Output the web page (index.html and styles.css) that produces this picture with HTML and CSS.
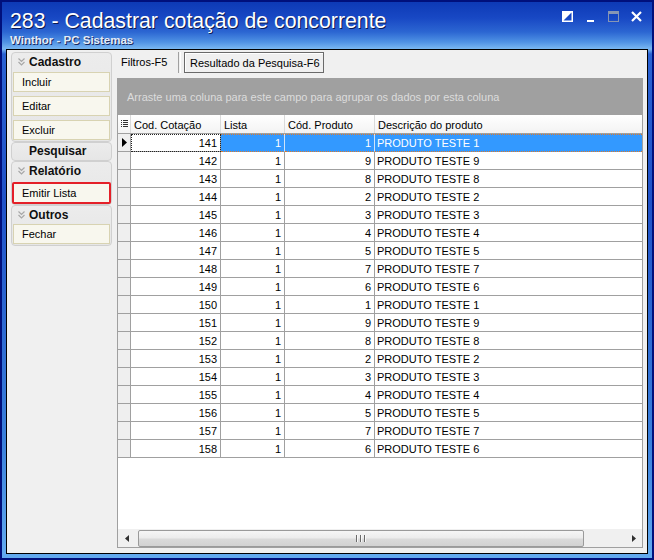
FILE: index.html
```html
<!DOCTYPE html>
<html lang="pt">
<head>
<meta charset="utf-8">
<title>283 - Cadastrar cotação de concorrente</title>
<link rel="stylesheet" href="styles.css">
</head>
<body>
<div class="window">
  <div class="titlebar">
    <div class="titles">
      <div class="title">283 - Cadastrar cotação de concorrente</div>
      <div class="subtitle">Winthor - PC Sistemas</div>
    </div>
    <div class="tbuttons">
      <svg class="tb" width="11" height="11" viewBox="0 0 11 11"><rect x="0.75" y="0.75" width="9.5" height="9.5" fill="none" stroke="#fff" stroke-width="1.5"/><polygon points="1,1 10,1 1,10" fill="#fff"/></svg>
      <svg class="tb" width="11" height="11" viewBox="0 0 11 11"><rect x="2" y="9" width="7" height="2" fill="#fff"/></svg>
      <svg class="tb" width="11" height="11" viewBox="0 0 11 11"><rect x="0.5" y="0.5" width="10" height="10" fill="none" stroke="#8796b4"/><rect x="0" y="0" width="11" height="3" fill="#8796b4"/></svg>
      <svg class="tb" width="11" height="11" viewBox="0 0 11 11"><path d="M1 1 L10 10 M10 1 L1 10" stroke="#fff" stroke-width="2.2"/></svg>
    </div>
  </div>
  <div class="client">
    <div class="sidebar">
      <div class="panel">
        <div class="phead"><svg class="chev" width="7" height="8" viewBox="0 0 7 8"><path d="M0.5 0.5 L3.5 3.5 L6.5 0.5 M0.5 4 L3.5 7 L6.5 4" fill="none" stroke="#a8a8a8" stroke-width="1.2"/></svg><span>Cadastro</span></div>
        <div class="item first">Incluir</div>
        <div class="item">Editar</div>
        <div class="item">Excluir</div>
      </div>
      <div class="panel">
        <div class="phead short"><span>Pesquisar</span></div>
      </div>
      <div class="panel tight">
        <div class="phead"><svg class="chev" width="7" height="8" viewBox="0 0 7 8"><path d="M0.5 0.5 L3.5 3.5 L6.5 0.5 M0.5 4 L3.5 7 L6.5 4" fill="none" stroke="#a8a8a8" stroke-width="1.2"/></svg><span>Relatório</span></div>
        <div class="item first marked">Emitir Lista</div>
      </div>
      <div class="panel">
        <div class="phead mid"><svg class="chev" width="7" height="8" viewBox="0 0 7 8"><path d="M0.5 0.5 L3.5 3.5 L6.5 0.5 M0.5 4 L3.5 7 L6.5 4" fill="none" stroke="#a8a8a8" stroke-width="1.2"/></svg><span>Outros</span></div>
        <div class="item first">Fechar</div>
      </div>
    </div>
    <div class="main">
      <div class="tabs">
        <div class="tab">Filtros-F5</div>
        <div class="tabsep"></div>
        <div class="tab active">Resultado da Pesquisa-F6</div>
      </div>
      <div class="grid">
        <div class="grouppanel">Arraste uma coluna para este campo para agrupar os dados por esta coluna</div>
        <div class="row head">
          <div class="c ind"><svg width="7" height="8" viewBox="0 0 7 8"><g fill="#303030"><rect x="0" y="0" width="1" height="1"/><rect x="2" y="0" width="5" height="1"/><rect x="0" y="2" width="1" height="1"/><rect x="2" y="2" width="5" height="1"/><rect x="0" y="4" width="1" height="1"/><rect x="2" y="4" width="5" height="1"/><rect x="0" y="6" width="1" height="1"/><rect x="2" y="6" width="5" height="1"/></g></svg></div>
          <div class="c">Cod. Cotação</div>
          <div class="c">Lista</div>
          <div class="c">Cód. Produto</div>
          <div class="c last">Descrição do produto</div>
        </div>
        <div class="body">
          <div class="row sel"><div class="c ind"><svg width="5" height="9" viewBox="0 0 5 9"><polygon points="0,0 5,4.5 0,9" fill="#000"/></svg></div><div class="c num focus">141</div><div class="c num">1</div><div class="c num">1</div><div class="c last">PRODUTO TESTE 1</div></div>
          <div class="row"><div class="c ind"></div><div class="c num">142</div><div class="c num">1</div><div class="c num">9</div><div class="c last">PRODUTO TESTE 9</div></div>
          <div class="row"><div class="c ind"></div><div class="c num">143</div><div class="c num">1</div><div class="c num">8</div><div class="c last">PRODUTO TESTE 8</div></div>
          <div class="row"><div class="c ind"></div><div class="c num">144</div><div class="c num">1</div><div class="c num">2</div><div class="c last">PRODUTO TESTE 2</div></div>
          <div class="row"><div class="c ind"></div><div class="c num">145</div><div class="c num">1</div><div class="c num">3</div><div class="c last">PRODUTO TESTE 3</div></div>
          <div class="row"><div class="c ind"></div><div class="c num">146</div><div class="c num">1</div><div class="c num">4</div><div class="c last">PRODUTO TESTE 4</div></div>
          <div class="row"><div class="c ind"></div><div class="c num">147</div><div class="c num">1</div><div class="c num">5</div><div class="c last">PRODUTO TESTE 5</div></div>
          <div class="row"><div class="c ind"></div><div class="c num">148</div><div class="c num">1</div><div class="c num">7</div><div class="c last">PRODUTO TESTE 7</div></div>
          <div class="row"><div class="c ind"></div><div class="c num">149</div><div class="c num">1</div><div class="c num">6</div><div class="c last">PRODUTO TESTE 6</div></div>
          <div class="row"><div class="c ind"></div><div class="c num">150</div><div class="c num">1</div><div class="c num">1</div><div class="c last">PRODUTO TESTE 1</div></div>
          <div class="row"><div class="c ind"></div><div class="c num">151</div><div class="c num">1</div><div class="c num">9</div><div class="c last">PRODUTO TESTE 9</div></div>
          <div class="row"><div class="c ind"></div><div class="c num">152</div><div class="c num">1</div><div class="c num">8</div><div class="c last">PRODUTO TESTE 8</div></div>
          <div class="row"><div class="c ind"></div><div class="c num">153</div><div class="c num">1</div><div class="c num">2</div><div class="c last">PRODUTO TESTE 2</div></div>
          <div class="row"><div class="c ind"></div><div class="c num">154</div><div class="c num">1</div><div class="c num">3</div><div class="c last">PRODUTO TESTE 3</div></div>
          <div class="row"><div class="c ind"></div><div class="c num">155</div><div class="c num">1</div><div class="c num">4</div><div class="c last">PRODUTO TESTE 4</div></div>
          <div class="row"><div class="c ind"></div><div class="c num">156</div><div class="c num">1</div><div class="c num">5</div><div class="c last">PRODUTO TESTE 5</div></div>
          <div class="row"><div class="c ind"></div><div class="c num">157</div><div class="c num">1</div><div class="c num">7</div><div class="c last">PRODUTO TESTE 7</div></div>
          <div class="row"><div class="c ind"></div><div class="c num">158</div><div class="c num">1</div><div class="c num">6</div><div class="c last">PRODUTO TESTE 6</div></div>
        </div>
        <div class="hscroll">
          <div class="arrow"><svg width="4" height="7" viewBox="0 0 4 7"><polygon points="4,0 0,3.5 4,7" fill="#303030"/></svg></div>
          <div class="track"><div class="thumb"><span class="grip"></span><span class="grip"></span><span class="grip"></span></div></div>
          <div class="arrow"><svg width="4" height="7" viewBox="0 0 4 7"><polygon points="0,0 4,3.5 0,7" fill="#303030"/></svg></div>
        </div>
      </div>
    </div>
  </div>
</div>
</body>
</html>
```

FILE: styles.css
```css
html, body {
  margin: 0;
  padding: 0;
}
body {
  font-family: "Liberation Sans", Arial, sans-serif;
  font-size: 11px;
  color: #000;
}
.window {
  width: 654px;
  height: 560px;
  box-sizing: border-box;
  border: 2px solid #00107c;
  background: linear-gradient(180deg, #0d3ab6 0px, #1848c4 16px, #2c66d2 30px, #4f92e4 40px, #7ab8f2 47px, #2a62d2 52px, #2052c8 200px, #3a80dc 440px, #62aaf0 552px);
  display: flex;
  flex-direction: column;
}
.titlebar {
  height: 47px;
  box-sizing: border-box;
  padding: 7px 10px 0 8px;
  display: flex;
  justify-content: space-between;
}
.title {
  font-size: 21.3px;
  line-height: 24px;
  color: #fff;
  text-shadow: 1px 1px 0 #0a1850;
  white-space: nowrap;
}
.subtitle {
  margin-top: 1px;
  font-size: 11.5px;
  line-height: 13px;
  font-weight: bold;
  color: #e4ecf8;
  text-shadow: 1px 1px 0 #1a2a60;
}
.tbuttons {
  display: flex;
  gap: 12px;
  margin-top: 2px;
}
.tb {
  display: block;
}
.client {
  flex: 1;
  margin: 0 4px 4px 4px;
  border: 1px solid #000;
  background: #f0f0f0;
  display: flex;
  min-height: 0;
}
.sidebar {
  width: 106px;
  box-sizing: border-box;
  padding: 2px 1px 0 4px;
  flex: none;
}
.panel {
  border: 1px solid #d0d0d0;
  border-radius: 4px;
  background: linear-gradient(180deg, #ececec, #e6e6e6);
  padding: 0 1px 1px 1px;
}
.panel.tight {
  padding-bottom: 0;
}
.phead {
  height: 18px;
  display: flex;
  align-items: center;
  padding-left: 5px;
  font-size: 12px;
  font-weight: bold;
  color: #101010;
}
.phead.short {
  height: 16px;
  padding-left: 16px;
}
.phead.mid {
  height: 17px;
}
.chev {
  display: block;
  margin-right: 4px;
}
.item {
  height: 20px;
  box-sizing: border-box;
  margin-top: 4px;
  border: 1px solid #d8d3b2;
  background: #f8f7ee;
  padding-left: 8px;
  line-height: 19px;
  font-size: 11px;
}
.item.first {
  margin-top: 1px;
}
.item.marked {
  height: 22px;
  margin: 2px -1px 0 -1px;
  border: 2px solid #e42028;
  border-radius: 2px;
  line-height: 18px;
}
.main {
  flex: 1;
  min-width: 0;
  padding: 0 4px 5px 4px;
  display: flex;
  flex-direction: column;
}
.tabs {
  height: 23px;
  flex: none;
  display: flex;
  align-items: flex-start;
  margin-bottom: 5px;
}
.tab {
  height: 21px;
  box-sizing: border-box;
  margin-top: 2px;
  line-height: 21px;
  padding-left: 4px;
  width: 61px;
}
.tabsep {
  width: 1px;
  height: 21px;
  margin-top: 2px;
  border-left: 1px solid #a0a0a0;
  border-right: 1px solid #fff;
  margin-right: 3px;
}
.tab.active {
  width: 140px;
  height: 21px;
  border: 1px solid #6a6a6a;
  box-shadow: inset 1px 1px 0 #fff;
  padding-left: 5px;
  background: #f0f0f0;
  line-height: 20px;
}
.grid {
  flex: 1;
  min-height: 0;
  border: 1px solid #a0a0a0;
  background: #fff;
  display: flex;
  flex-direction: column;
}
.grouppanel {
  height: 36px;
  flex: none;
  background: #a0a0a0;
  color: #dcdcdc;
  display: flex;
  align-items: center;
  padding-left: 9px;
  white-space: nowrap;
}
.row {
  display: grid;
  grid-template-columns: 13px 90px 64px 90px 1fr;
  height: 18px;
}
.row.head {
  height: 19px;
  background: linear-gradient(180deg, #ffffff, #f3f3f3);
  border-bottom: 1px solid #a0a0a0;
  box-sizing: border-box;
}
.c {
  border-right: 1px solid #a0a0a0;
  border-bottom: 1px solid #a0a0a0;
  line-height: 17px;
  padding: 1px 3px 0 2px;
  white-space: nowrap;
  overflow: hidden;
}
.c.last {
  border-right: none;
}
.head .c {
  border-bottom: none;
  border-right: 1px solid #dadada;
  line-height: 18px;
  padding: 1px 3px 0 3px;
}
.head .c.last {
  border-right: none;
}
.c.ind {
  background: #efefef;
  padding: 0;
  display: flex;
  align-items: center;
  justify-content: center;
}
.head .c.ind {
  background: transparent;
}
.c.ind svg {
  display: block;
}
.c.num {
  text-align: right;
}
.body {
  flex: 1;
  min-height: 0;
}
.row.sel .c {
  background: repeating-linear-gradient(90deg, #e07a28 0 1px, transparent 1px 2px) top / 100% 1px no-repeat, #3399ff;
  color: #fff;
  border-right-color: #cfe3f8;
  border-bottom: 1px dotted #e07a28;
}
.row.sel .c.ind {
  background: #efefef;
  border-right-color: #a0a0a0;
  border-bottom: 1px solid #a0a0a0;
}
.row.sel .c.focus {
  background: #fff;
  color: #000;
  outline: 1px dotted #222;
  outline-offset: -1px;
  border-bottom: 1px solid #a0a0a0;
  border-right-color: #a0a0a0;
}
.hscroll {
  height: 18px;
  flex: none;
  display: flex;
  background: #f0f0f0;
}
.arrow {
  width: 17px;
  display: flex;
  align-items: center;
  justify-content: center;
  padding-top: 1px;
  box-sizing: border-box;
}
.arrow svg {
  display: block;
}
.track {
  flex: 1;
  display: flex;
  align-items: flex-end;
}
.thumb {
  margin-left: 3px;
  width: 446px;
  height: 17px;
  box-sizing: border-box;
  border: 1px solid #9a9a9a;
  border-radius: 2px;
  background: linear-gradient(180deg, #f6f6f6 0%, #ececec 45%, #dadada 55%, #d2d2d2 100%);
  display: flex;
  align-items: center;
  justify-content: center;
  gap: 2px;
}
.grip {
  width: 1px;
  height: 7px;
  background: #6a6a6a;
  border-right: 1px solid #f8f8f8;
}
```
